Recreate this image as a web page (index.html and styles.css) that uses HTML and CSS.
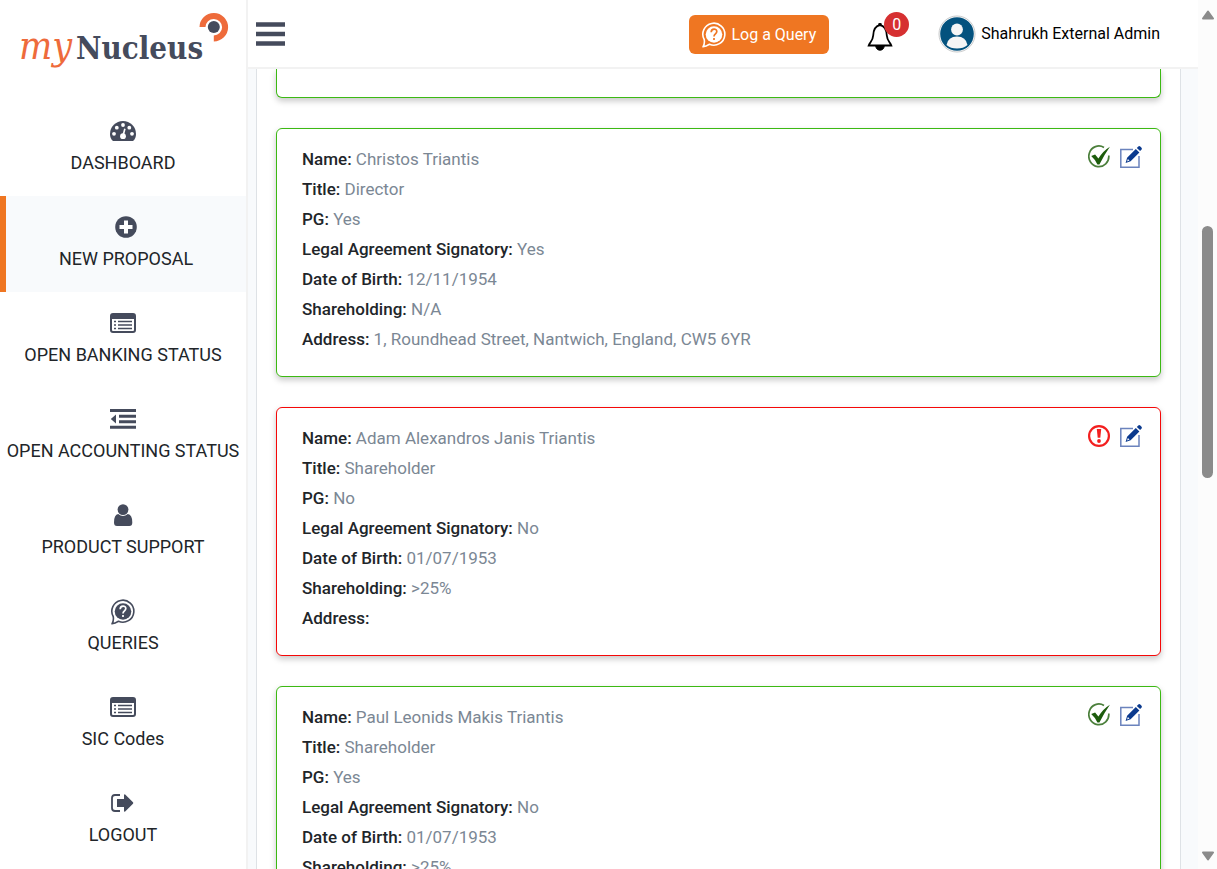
FILE: index.html
```html
<!DOCTYPE html>
<html lang="en">
<head>
<meta charset="utf-8">
<title>myNucleus - New Proposal</title>
<link rel="stylesheet" href="styles.css">
</head>
<body>
<svg class="sprite" aria-hidden="true">
  <symbol id="list" viewBox="0 0 26 20"><rect x="1" y="1" width="24" height="18" rx="2" fill="none" stroke="currentColor" stroke-width="2"/><path d="M1 1.5h24V6H1z" fill="currentColor"/><path d="M4 8.5h2m2 0h14M4 12h2m2 0h14M4 15.5h2m2 0h14" stroke="currentColor" stroke-width="1.6"/></symbol>
  <symbol id="query" viewBox="0 0 26 28"><path d="M3.2 18.5A11 11 0 1 1 8.5 23.3Q5 25.5 2 25.8 4 22.5 3.2 18.5Z" fill="none" stroke="currentColor" stroke-width="1.6" stroke-linejoin="round"/><circle cx="13" cy="13.5" r="8.3" fill="currentColor"/><path class="query-mark" d="M10.2 11.2c0-4 5.6-4 5.6-.7 0 2.4-2.8 2.3-2.8 5M13 17v2" fill="none" stroke-width="1.7"/></symbol>
  <symbol id="edit" viewBox="0 0 22 22"><path d="M13 3.5H.8v17.7H19V10" fill="none" stroke="#6b83bd" stroke-width="1.5"/><path d="M5.6 17l1.5-5.2L15.8 3l3.6 3.4-8.8 8.9zM16.8 2l1.5-1.5q1-.8 2 .1l1.2 1.2q.8 1-.1 1.9l-1.3 1.4z" fill="#0b3a8e"/><path d="M7 15.5l.9-2.4 1.6 1.5z" fill="#fff"/></symbol>
  <symbol id="ok" viewBox="0 0 22 24"><path d="M16 2.5A10 10.3 0 1 0 20.8 10.5" fill="none" stroke="#4b7f3b" stroke-width="1.7"/><path d="M3.2 11l3.9-1.6 3.3 4.2Q15 6 21.9 1.8 16.4 9.7 11.4 19.4H9.4Q7.2 14.5 3.2 11z" fill="#1d5c0c"/></symbol>
  <symbol id="warn" viewBox="0 0 22 24"><circle cx="11" cy="12" r="9.9" fill="none" stroke="#f31f1f" stroke-width="2.2"/><path d="M8.8 5h4.4l-.9 8.8H9.7z" fill="#f31f1f"/><circle cx="11" cy="17" r="1.9" fill="#f31f1f"/></symbol>
</svg>
<div class="app">
  <aside class="sidebar">
    <a class="logo" href="#" aria-label="myNucleus">
      <svg width="212" height="62" viewBox="0 0 212 62"><text class="logo-my" x="0" y="51">my</text><text class="logo-name" x="57" y="51">Nucleus</text><path d="M183.5 19A11.3 11.3 0 1 1 194.8 30.5" fill="none" stroke="#ee6b3b" stroke-width="6"/><circle cx="194.8" cy="19" r="6" fill="#454b5c"/></svg>
    </a>
    <nav class="menu">
      <a class="item" href="#"><svg class="icon" viewBox="0 0 26 20"><path d="M3 20Q0 17.5 0 13A13 13 0 0 1 26 13Q26 17.5 23 20Z" fill="currentColor"/><g fill="#fff"><circle cx="4" cy="12.8" r="1.9"/><circle cx="6.8" cy="6.7" r="1.9"/><circle cx="13" cy="4" r="1.9"/><circle cx="19.3" cy="6.7" r="1.9"/><circle cx="22" cy="12.8" r="1.9"/><circle cx="13" cy="15.2" r="2.9"/></g><path d="M13.2 14l1.7-6.3" stroke="#fff" stroke-width="1.6"/></svg><span>DASHBOARD</span></a>
      <a class="item active" href="#"><svg class="icon" viewBox="0 0 26 22"><circle cx="13" cy="11" r="10.8" fill="currentColor"/><path d="M13 4.5v13M6.5 11h13" stroke="#fff" stroke-width="4"/></svg><span>NEW PROPOSAL</span></a>
      <a class="item" href="#"><svg class="icon"><use href="#list"/></svg><span>OPEN BANKING STATUS</span></a>
      <a class="item" href="#"><svg class="icon" viewBox="0 0 26 20"><path d="M0 1.5h26M9 7.2h17M9 12.7h17M0 18.3h26" stroke="currentColor" stroke-width="3"/><path d="M6 5.5v9L.8 10z" fill="currentColor"/></svg><span>OPEN ACCOUNTING STATUS</span></a>
      <a class="item" href="#"><svg class="icon" viewBox="0 0 26 22"><circle cx="13" cy="5.6" r="5.4" fill="currentColor"/><path d="M8.2 10q4.8 3.8 9.6 0 4.5.5 4.5 8.5 0 3.5-3 3.5H7q-3 0-3-3.5 0-8 4.2-8.5z" fill="currentColor"/></svg><span>PRODUCT SUPPORT</span></a>
      <a class="item" href="#"><svg class="icon icon-tall"><use href="#query"/></svg><span>QUERIES</span></a>
      <a class="item" href="#"><svg class="icon"><use href="#list"/></svg><span>SIC Codes</span></a>
      <a class="item" href="#"><svg class="icon" viewBox="0 0 26 20"><path d="M10 2H5Q2 2 2 5v10q0 3 3 3h5" fill="none" stroke="currentColor" stroke-width="1.8"/><path d="M7 6h7V2q.4-1 1.2-.5L23 9.3q.6.7 0 1.4l-7.8 7.8Q14 19 14 18v-4H7z" fill="currentColor"/></svg><span>LOGOUT</span></a>
    </nav>
  </aside>
  <div class="page">
    <header class="header">
      <button class="toggle" aria-label="Toggle menu"><svg width="29" height="24" viewBox="0 0 29 24"><path d="M1 2.5h27M1 12h27M1 21.5h27" stroke="#454b5c" stroke-width="4.6" stroke-linecap="square"/></svg></button>
      <button class="log-query"><svg width="26" height="28"><use href="#query"/></svg>Log a Query</button>
      <button class="bell" aria-label="Notifications"><svg width="28" height="30" viewBox="0 0 28 30"><path d="M13 3.2C7.5 4 6.5 8.5 6.2 13.5 5.8 19 3 20 1.7 23.5h22.6C23 20 20.2 19 19.8 13.5 19.5 8.5 18.5 4 13 3.2z" fill="#fff" stroke="#000" stroke-width="1.8"/><path d="M11.8 3.5V1.6h2.4v1.9M8.8 24a4.2 4.2 0 0 0 8.4 0z" stroke="#000"/></svg><span class="badge">0</span></button>
      <a class="user" href="#"><svg width="38" height="38" viewBox="0 0 38 38"><circle cx="19" cy="19" r="18" fill="#fff" stroke="#c7c9ca"/><circle cx="19" cy="19" r="16.8" fill="#04527e"/><circle cx="19" cy="14.5" r="5.9" fill="#f5f5f5"/><path d="M8.5 30Q10 21.5 19 21.5T29.5 30Q25.5 33.5 19 33.5T8.5 30z" fill="#f5f5f5"/></svg><span>Shahrukh External Admin</span></a>
    </header>
    <main class="content">
      <div class="panel">
        <section class="card tail"></section>
        <section class="card">
          <dl class="details">
            <div><dt>Name:</dt> <dd>Christos Triantis</dd></div>
            <div><dt>Title:</dt> <dd>Director</dd></div>
            <div><dt>PG:</dt> <dd>Yes</dd></div>
            <div><dt>Legal Agreement Signatory:</dt> <dd>Yes</dd></div>
            <div><dt>Date of Birth:</dt> <dd>12/11/1954</dd></div>
            <div><dt>Shareholding:</dt> <dd>N/A</dd></div>
            <div><dt>Address:</dt> <dd>1, Roundhead Street, Nantwich, England, CW5 6YR</dd></div>
          </dl>
          <div class="actions"><svg width="22" height="24" role="img" aria-label="Complete"><use href="#ok"/></svg><button aria-label="Edit"><svg width="22" height="22"><use href="#edit"/></svg></button></div>
        </section>
        <section class="card error">
          <dl class="details">
            <div><dt>Name:</dt> <dd>Adam Alexandros Janis Triantis</dd></div>
            <div><dt>Title:</dt> <dd>Shareholder</dd></div>
            <div><dt>PG:</dt> <dd>No</dd></div>
            <div><dt>Legal Agreement Signatory:</dt> <dd>No</dd></div>
            <div><dt>Date of Birth:</dt> <dd>01/07/1953</dd></div>
            <div><dt>Shareholding:</dt> <dd>&gt;25%</dd></div>
            <div><dt>Address:</dt> <dd></dd></div>
          </dl>
          <div class="actions"><svg width="22" height="24" role="img" aria-label="Incomplete"><use href="#warn"/></svg><button aria-label="Edit"><svg width="22" height="22"><use href="#edit"/></svg></button></div>
        </section>
        <section class="card">
          <dl class="details">
            <div><dt>Name:</dt> <dd>Paul Leonids Makis Triantis</dd></div>
            <div><dt>Title:</dt> <dd>Shareholder</dd></div>
            <div><dt>PG:</dt> <dd>Yes</dd></div>
            <div><dt>Legal Agreement Signatory:</dt> <dd>No</dd></div>
            <div><dt>Date of Birth:</dt> <dd>01/07/1953</dd></div>
            <div><dt>Shareholding:</dt> <dd>&gt;25%</dd></div>
          </dl>
          <div class="actions"><svg width="22" height="24" role="img" aria-label="Complete"><use href="#ok"/></svg><button aria-label="Edit"><svg width="22" height="22"><use href="#edit"/></svg></button></div>
        </section>
      </div>
    </main>
  </div>
  <div class="scrollbar" aria-hidden="true">
    <svg width="12" height="10" viewBox="0 0 12 10"><path d="M6 1.5L11 8.5H1z" fill="#8b8b8b" stroke="#8b8b8b" stroke-width="2" stroke-linejoin="round"/></svg>
    <div class="track"><div class="thumb"></div></div>
    <svg width="12" height="10" viewBox="0 0 12 10"><path d="M6 8.5L11 1.5H1z" fill="#8b8b8b" stroke="#8b8b8b" stroke-width="2" stroke-linejoin="round"/></svg>
  </div>
</div>
</body>
</html>
```
FILE: styles.css
```css
* { box-sizing: border-box; }
body { margin: 0; font-family: Roboto, "Liberation Sans", sans-serif; font-size: 16px; color: #212529; background: #f8fafc; }
a { color: inherit; text-decoration: none; }
button { font: inherit; border: 0; padding: 0; background: none; cursor: pointer; }
svg { display: block; flex: none; }
.sprite { position: absolute; width: 0; height: 0; }
.app { display: flex; height: 100vh; overflow: hidden; }

.sidebar { flex: none; width: 248px; background: #fff; border-right: 2px solid #f2f2f2; }
.logo { display: block; height: 100px; padding: 8px 0 0 19px; }
.logo-my { font: italic 39px "DejaVu Serif Condensed", "DejaVu Serif", serif; fill: #ee6b3b; }
.logo-name { font: bold 31px "DejaVu Serif Condensed", "DejaVu Serif", serif; fill: #454b5c; }
.item { display: flex; flex-direction: column; align-items: center; height: 96px; padding-top: 18px; font-size: 18px; line-height: 22px; white-space: nowrap; }
.item span { margin-top: 6px; }
.item.active { background: #f8fafc; border-left: 6px solid #ef7622; }
.icon { width: 26px; height: 28px; padding: 2px 0 4px; color: #454b5c; }
.icon-tall { padding: 0; }
.query-mark { stroke: var(--mark, #fff); }

.page { flex: 1; min-width: 0; display: flex; flex-direction: column; }
.header { flex: none; display: flex; align-items: center; height: 69px; padding: 0 38px 0 8px; background: #fff; border-bottom: 2px solid #f2f2f2; }
.toggle { margin-right: auto; }
.log-query { --mark: #ef7622; display: flex; align-items: center; gap: 4px; height: 39px; margin-top: 2px; padding: 0 13px 0 12px; border-radius: 6px; background: #ef7622; color: #fff; }
.bell { position: relative; margin: 6px 29px 0 38px; width: 42px; }
.badge { position: absolute; top: -10px; right: 0; width: 25px; height: 25px; border-radius: 50%; background: #d63031; color: #fff; line-height: 25px; }
.user { display: flex; align-items: center; gap: 5px; color: #000; white-space: nowrap; }

.content { flex: 1; min-height: 0; overflow: hidden; padding: 0 17px 0 8px; }
.panel { min-height: 100%; padding: 0 19px; background: #fff; border: solid #dee2e6; border-width: 0 1px; }
.card { display: flex; justify-content: space-between; margin-bottom: 30px; padding: 15px 18px 22px 25px; border: 1px solid #3cb913; border-radius: 6px; background: #fff; box-shadow: 0 3px 6px rgba(0, 0, 0, .22); }
.card.error { border-color: #f50808; }
.card.tail { height: 29px; padding: 0; border-top: 0; border-radius: 0 0 6px 6px; }
.details { margin: 0; font-size: 17px; line-height: 30px; }
.details dt { display: inline; font-weight: 500; }
.details dd { display: inline; margin: 0; color: #7b8794; }
.actions { display: flex; align-items: center; gap: 10px; height: 26px; }

.scrollbar { flex: none; display: flex; flex-direction: column; align-items: center; width: 19px; padding: 10px 0 8px; background: #fcfcfc; }
.track { flex: 1; display: flex; flex-direction: column; width: 11px; }
.track::before { content: ""; flex: 206; }
.track::after { content: ""; flex: 373; }
.thumb { flex: 251; border-radius: 6px; background: #8b8b8b; }
```
